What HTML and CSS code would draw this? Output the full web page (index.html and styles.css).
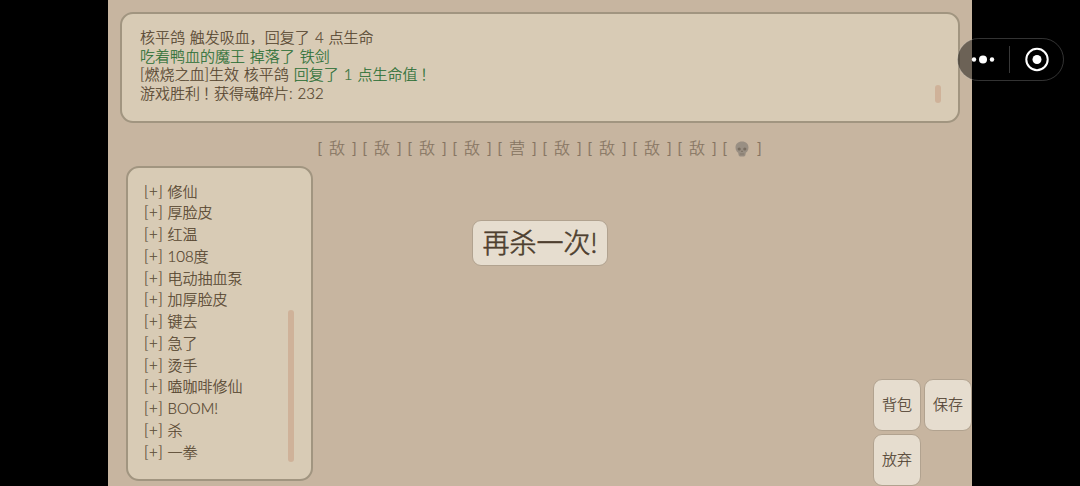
FILE: index.html
```html
<!DOCTYPE html>
<html lang="zh-CN">
<head>
  <meta charset="UTF-8" />
  <title>再杀一次!</title>
  <link rel="stylesheet" href="styles.css">
</head>
<body>
  <div id="game">
    <!-- Battle log -->
    <div class="panel log">
      <p>核平鸽 触发吸血，回复了 <span class="num">4</span> 点生命</p>
      <p class="green">吃着鸭血的魔王 掉落了 铁剑</p>
      <p>[燃烧之血]生效 核平鸽 <span class="green">回复了 <span class="num">1</span> 点生命值<span class="mark" lang="zh-TW">！</span></span></p>
      <p>游戏胜利<span class="mark" lang="zh-TW">！</span>获得魂碎片: 232</p>
      <div class="scrollbar"></div>
    </div>

    <!-- Stage path -->
    <div class="path">
      <span class="stage"><i>[</i><b>敌</b><i>]</i></span>
      <span class="stage"><i>[</i><b>敌</b><i>]</i></span>
      <span class="stage"><i>[</i><b>敌</b><i>]</i></span>
      <span class="stage"><i>[</i><b>敌</b><i>]</i></span>
      <span class="stage"><i>[</i><b>营</b><i>]</i></span>
      <span class="stage"><i>[</i><b>敌</b><i>]</i></span>
      <span class="stage"><i>[</i><b>敌</b><i>]</i></span>
      <span class="stage"><i>[</i><b>敌</b><i>]</i></span>
      <span class="stage"><i>[</i><b>敌</b><i>]</i></span>
      <span class="stage"><i>[</i>
        <svg class="skull" viewBox="0 0 14 16">
          <path fill="#7c7670" d="M7 .5C3 .5.5 3 .5 6.4c0 1.500.4 2.700 1 3.600.4.700.7 1.400 1.600 1.500l.5 2.600c.1.900.7 1.400 1.500 1.400h3.800c.8 0 1.400-.5 1.500-1.400l.5-2.600c.9-.1 1.200-.8 1.600-1.500.6-.9 1-2.100 1-3.600C13.500 3 11 .5 7 .5z"/>
          <circle fill="#453e37" cx="4.200" cy="8" r="1.600"/>
          <circle fill="#453e37" cx="9.800" cy="8" r="1.600"/>
          <path fill="#453e37" d="M7 9.300l1 1.700H6z"/>
          <path stroke="#57504a" stroke-width=".6" d="M4.500 13h5M6 12v2.500M8 12v2.500"/>
        </svg>
      <i>]</i></span>
    </div>

    <div class="content">
      <!-- Skills -->
      <div class="panel skills">
        <ul>
          <li><span>[+]</span>修仙</li>
          <li><span>[+]</span>厚脸皮</li>
          <li><span>[+]</span>红温</li>
          <li><span>[+]</span>108度</li>
          <li><span>[+]</span>电动抽血泵</li>
          <li><span>[+]</span>加厚脸皮</li>
          <li><span>[+]</span>键去</li>
          <li><span>[+]</span>急了</li>
          <li><span>[+]</span>烫手</li>
          <li><span>[+]</span>嗑咖啡修仙</li>
          <li><span>[+]</span>BOOM!</li>
          <li><span>[+]</span>杀</li>
          <li><span>[+]</span>一拳</li>
        </ul>
        <div class="scrollbar"></div>
      </div>

      <button class="again">再杀一次!</button>

      <div class="menu">
        <button>背包</button>
        <button>保存</button>
        <button>放弃</button>
      </div>
    </div>
  </div>

  <!-- Mini program capsule -->
  <div class="capsule">
    <svg width="107" height="43" viewBox="0 0 107 43">
      <rect x=".5" y=".5" width="106" height="42" rx="21" fill="#000" fill-opacity=".46" stroke="#fff" stroke-opacity=".2"/>
      <g fill="#fff">
        <circle cx="17" cy="21.500" r="2.200"/>
        <circle cx="26" cy="21.500" r="4"/>
        <circle cx="35" cy="21.500" r="2.200"/>
        <circle cx="80" cy="21.500" r="4.500"/>
      </g>
      <path stroke="#fff" stroke-opacity=".22" d="M52.500 8v27"/>
      <circle cx="80" cy="21.500" r="10.700" fill="none" stroke="#fff" stroke-width="2"/>
    </svg>
  </div>
</body>
</html>
```
FILE: styles.css
```css
* {
  box-sizing: border-box;
}

body {
  margin: 0;
  height: 486px;
  overflow: hidden;
  background-color: #000;
  color: #55452f;
  font-family: Lato, "Noto Sans CJK SC", sans-serif;
  font-size: 15px;
  font-weight: 300;
}

#game {
  width: 864px;
  height: 486px;
  margin: 0 auto;
  padding: 12px 0 0 12px;
  overflow: hidden;
  background-color: #c7b5a0;
  -webkit-text-stroke: 0.2px currentColor;
}

.panel {
  position: relative;
  background-color: #d8cbb5;
  border: 2px solid #a19580;
  border-radius: 13px;
}

.scrollbar {
  position: absolute;
  width: 6px;
  border-radius: 3px;
  background-color: #cfb299;
}

.log {
  width: 840px;
  height: 111px;
  padding: 14px 18px;
}

.log p {
  margin: 0;
  line-height: 18.700px;
  height: 18.700px;
  word-spacing: 0.8px;
  white-space: nowrap;
}

.log .num {
  display: inline-block;
  width: 9px;
  text-align: center;
}

.log .mark {
  margin-left: -1px;
  font-family: "Noto Sans CJK TC", sans-serif;
}

.log .scrollbar {
  right: 17px;
  bottom: 18px;
  height: 18px;
}

.green {
  color: #2b6f35;
}

.path {
  display: flex;
  width: 450px;
  margin: 14px 0 0 195px;
  height: 22px;
  color: #5a4a38;
  opacity: 0.6;
}

.stage {
  display: flex;
  width: 45px;
  padding: 0 3px 0 2px;
  align-items: center;
  justify-content: space-between;
  font-size: 16px;
  line-height: 22px;
}

.stage i,
.stage b {
  font-style: normal;
  font-weight: 300;
}

.stage i {
  font-family: Inter, sans-serif;
}

.skull {
  width: 14px;
  height: 16px;
  margin-top: 2px;
}

.content {
  display: flex;
  align-items: flex-start;
  margin: 7px 0 0 6px;
}

.skills {
  width: 187px;
  height: 315px;
  padding: 17px 16px;
}

.skills ul {
  margin: 0;
  padding: 0;
  height: 278px;
  overflow: hidden;
  list-style: none;
}

.skills li {
  display: flex;
  height: 21.750px;
  line-height: 21.750px;
}

.skills li:first-child {
  margin-top: -4.500px;
}

.skills li span {
  width: 23.500px;
  letter-spacing: 0.5px;
}

.skills .scrollbar {
  right: 17px;
  top: 142px;
  height: 152px;
}

button {
  padding: 0 0 3px;
  border: 1px solid #b1a28f;
  border-radius: 9px;
  background-color: #e6ddcf;
  color: #4e3f2f;
  font: inherit;
}

.again {
  width: 136px;
  height: 46px;
  margin: 54px 0 0 159px;
  font-size: 27px;
  -webkit-text-stroke-width: 0.6px;
}

.menu {
  display: grid;
  grid-template-columns: 48px 48px;
  grid-auto-rows: 52px;
  gap: 3px;
  margin: 213px 0 0 265px;
}

.capsule {
  position: absolute;
  top: 38px;
  left: 956.500px;
}

.capsule svg {
  display: block;
}
```
